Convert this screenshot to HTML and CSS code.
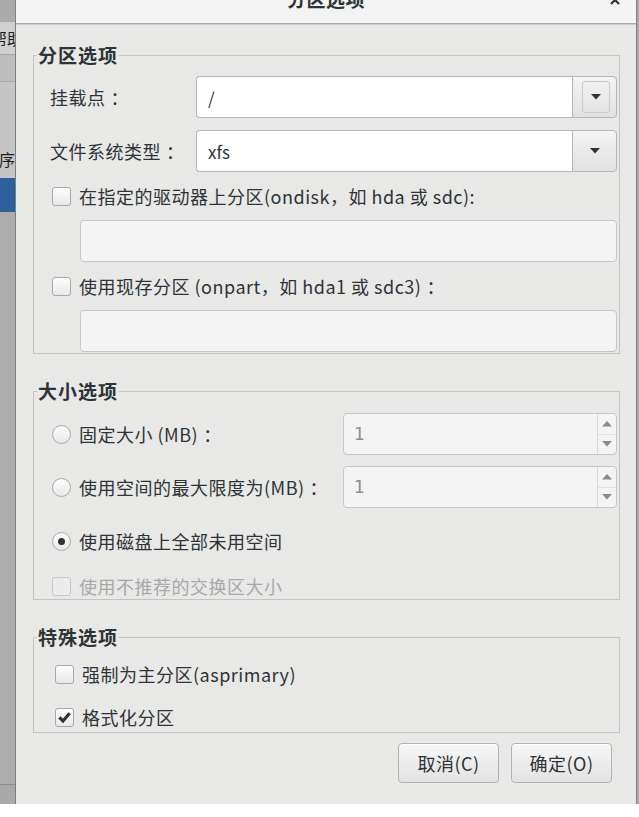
FILE: index.html
```html
<!DOCTYPE html>
<html lang="zh-CN">
<head>
<meta charset="utf-8">
<title>分区选项</title>
<link rel="stylesheet" href="styles.css">
</head>
<body>
<div class="screen">
  <aside class="bg-strip">
    <div class="band band-top"></div>
    <div class="band band-menu"><span class="cut-text">帮助</span></div>
    <div class="band band-tool"></div>
    <div class="band band-list"><span class="end-text">程序</span></div>
    <div class="band band-sel"></div>
    <div class="band band-rest"></div>
    <div class="band band-foot"></div>
  </aside>

  <section class="dialog">
    <header class="titlebar">
      <span></span>
      <span class="title">分区选项</span>
      <svg class="close" width="10" height="10" viewBox="0 0 10 10"><path d="M1 1 L9 9 M9 1 L1 9" stroke="#2e3436" stroke-width="2.2" fill="none"/></svg>
    </header>

    <div class="content">
      <fieldset class="frame">
        <legend>分区选项</legend>
        <div class="frame-body body-1">
          <div class="field-row">
            <span class="field-label">挂载点<span class="fw">：</span></span>
            <div class="combo">
              <div class="combo-entry">/</div>
              <div class="combo-btn"><span class="combo-inner"><svg width="10" height="6" viewBox="0 0 10 6"><polygon points="0,0 10,0 5,5.5" fill="#2e3436"/></svg></span></div>
            </div>
          </div>
          <div class="field-row">
            <span class="field-label">文件系统类型<span class="fw">：</span></span>
            <div class="combo">
              <div class="combo-entry">xfs</div>
              <div class="combo-btn"><svg width="10" height="6" viewBox="0 0 10 6"><polygon points="0,0 10,0 5,5.5" fill="#2e3436"/></svg></div>
            </div>
          </div>
          <div class="check-row"><span class="cb"></span><span>在指定的驱动器上分区(ondisk，如 hda 或 sdc):</span></div>
          <div class="entry"></div>
          <div class="check-row"><span class="cb"></span><span>使用现存分区 (onpart，如 hda1 或 sdc3)<span class="fw">：</span></span></div>
          <div class="entry"></div>
        </div>
      </fieldset>

      <fieldset class="frame">
        <legend>大小选项</legend>
        <div class="frame-body body-2">
          <div class="size-row">
            <div class="opt"><span class="radio"></span><span>固定大小 (MB)<span class="fw">：</span></span></div>
            <div class="spin">
              <span class="spin-value">1</span>
              <span class="spin-btns">
                <span class="spin-half"><svg width="10" height="6" viewBox="0 0 10 6"><polygon points="0,5.5 10,5.5 5,0" fill="#8b8b8b"/></svg></span>
                <span class="spin-half lower"><svg width="10" height="6" viewBox="0 0 10 6"><polygon points="0,0 10,0 5,5.5" fill="#8b8b8b"/></svg></span>
              </span>
            </div>
          </div>
          <div class="size-row row-2">
            <div class="opt"><span class="radio"></span><span>使用空间的最大限度为(MB)<span class="fw">：</span></span></div>
            <div class="spin">
              <span class="spin-value">1</span>
              <span class="spin-btns">
                <span class="spin-half"><svg width="10" height="6" viewBox="0 0 10 6"><polygon points="0,5.5 10,5.5 5,0" fill="#8b8b8b"/></svg></span>
                <span class="spin-half lower"><svg width="10" height="6" viewBox="0 0 10 6"><polygon points="0,0 10,0 5,5.5" fill="#8b8b8b"/></svg></span>
              </span>
            </div>
          </div>
          <div class="check-row spaced"><span class="radio checked"></span><span>使用磁盘上全部未用空间</span></div>
          <div class="check-row spaced disabled"><span class="cb"></span><span>使用不推荐的交换区大小</span></div>
        </div>
      </fieldset>

      <fieldset class="frame">
        <legend>特殊选项</legend>
        <div class="frame-body body-3">
          <div class="check-row inset"><span class="cb"></span><span>强制为主分区(asprimary)</span></div>
          <div class="check-row inset"><span class="cb"><svg width="17" height="17" viewBox="0 0 17 17"><path d="M3.3 8.3 L7 12 L13.7 4.3" stroke="#2e3436" stroke-width="3.2" fill="none"/></svg></span><span>格式化分区</span></div>
        </div>
      </fieldset>

      <div class="actions">
        <button class="btn" type="button">取消(C)</button>
        <button class="btn" type="button">确定(O)</button>
      </div>
    </div>
  </section>

  <div class="edge"></div>
</div>
</body>
</html>
```

FILE: styles.css
```css
* { box-sizing: border-box; }

html, body {
  margin: 0;
  padding: 0;
  background: #ffffff;
}

body {
  font-family: "Noto Sans CJK SC", sans-serif;
  color: #2e3436;
}

.screen {
  display: flex;
  width: 639px;
  height: 804px;
}

/* background window strip on the left */
.bg-strip {
  width: 16px;
  flex: none;
  display: flex;
  flex-direction: column;
  border-right: 1px solid #7e7e7e;
  overflow: hidden;
  font-size: 16px;
  line-height: 18px;
  color: #1e1e1e;
}

.band {
  flex: none;
  display: flex;
  align-items: center;
  overflow: hidden;
  white-space: nowrap;
}

.band-top { height: 22px; background: #ababab; }
.band-menu { height: 33px; background: #d0d0d0; border-bottom: 1px solid #a4a4a4; }
.band-tool { height: 27px; background: #bdbdbd; border-bottom: 1px solid #a9a9a9; }
.band-list { height: 96px; background: #c5c5c5; justify-content: flex-end; align-items: flex-end; padding-bottom: 10px; }
.band-sel { height: 34px; background: #2f5e9c; }
.band-rest { height: 573px; background: #adadad; border-bottom: 1px solid #8f8f8f; }
.band-foot { flex: 1; background: #a9a9a9; }

.cut-text { margin-left: -9px; }
.end-text { margin-right: 0; }

.edge {
  flex: 1;
  background: #a7a7a7;
}

/* dialog */
.dialog {
  width: 621px;
  flex: none;
  display: flex;
  flex-direction: column;
  background: #e8e8e7;
  border-right: 1px solid #858585;
}

.titlebar {
  height: 24px;
  flex: none;
  display: grid;
  grid-template-columns: 1fr auto 1fr;
  align-items: start;
  background: #f3f3f3;
  border-bottom: 1px solid #a8a8a8;
  box-shadow: 0 1px 0 #cdcdcd;
  overflow: hidden;
}

.title {
  font-size: 19px;
  line-height: 20px;
  font-weight: 700;
  margin-top: -11px;
  letter-spacing: 0.5px;
}

.close {
  justify-self: end;
  margin-right: 16px;
  margin-top: -5px;
}

.content {
  flex: 1;
  display: flex;
  flex-direction: column;
  padding: 21px 16px 21px 17px;
}

.frame {
  margin: 0;
  padding: 0;
  min-width: 0;
  border: 1px solid #c3c3c3;
}

.frame + .frame { margin-top: 27px; }

.frame legend {
  margin-left: 3px;
  padding: 0 1px;
  font-size: 19px;
  line-height: 20px;
  font-weight: 700;
  letter-spacing: 1px;
  color: #2e3436;
}

.frame-body {
  display: flex;
  flex-direction: column;
  padding: 11px 2px 1px 16px;
  font-size: 18px;
  letter-spacing: 0.5px;
}

.fw {
  padding-left: 5px;
}

.body-1 { gap: 12px; }
.body-2 { padding-top: 12px; padding-bottom: 1px; }
.body-3 { padding-top: 15px; padding-bottom: 3px; gap: 19px; }

.field-row {
  display: grid;
  grid-template-columns: 146px 1fr;
  align-items: center;
  height: 42px;
}

.combo {
  display: flex;
  height: 42px;
}

.combo-entry {
  flex: 1;
  display: flex;
  align-items: center;
  padding-left: 11px;
  background: #ffffff;
  border: 1px solid #b6b6b6;
  border-right: 0;
  border-radius: 4px 0 0 4px;
  font-size: 17px;
  letter-spacing: 0;
}

.combo-btn {
  width: 45px;
  flex: none;
  display: flex;
  align-items: center;
  justify-content: center;
  background: linear-gradient(#f4f4f4, #e1e1e1);
  border: 1px solid #b6b6b6;
  border-radius: 0 4px 4px 0;
}

.combo-inner {
  width: 28px;
  height: 32px;
  display: flex;
  align-items: center;
  justify-content: center;
  border: 1px solid #cbcbcb;
  border-radius: 3px;
  margin-left: 3px;
}

.check-row {
  display: flex;
  align-items: center;
  gap: 8px;
  height: 24px;
  padding-left: 2px;
}

.check-row.inset { padding-left: 5px; }
.check-row.spaced { margin-top: 21px; }

.cb {
  width: 19px;
  height: 19px;
  flex: none;
  display: flex;
  align-items: center;
  justify-content: center;
  border: 1px solid #a8a8a8;
  border-radius: 3px;
  background: linear-gradient(#fdfdfd, #e8e8e8);
}

.radio {
  width: 19px;
  height: 19px;
  flex: none;
  display: flex;
  align-items: center;
  justify-content: center;
  border: 1px solid #a8a8a8;
  border-radius: 50%;
  background: linear-gradient(#fdfdfd, #e8e8e8);
}

.radio.checked::after {
  content: "";
  width: 7px;
  height: 7px;
  border-radius: 50%;
  background: #2e3436;
}

.disabled { color: #a9a9a9; }
.disabled .cb {
  border-color: #c6c6c6;
  background: #ececec;
}

.entry {
  height: 42px;
  margin-left: 30px;
  background: #f4f4f4;
  border: 1px solid #c6c6c6;
  border-radius: 4px;
}

.size-row {
  display: grid;
  grid-template-columns: 293px 1fr;
  align-items: center;
  height: 42px;
}

.size-row.row-2 { margin-top: 11px; }

.opt {
  display: flex;
  align-items: center;
  gap: 8px;
  padding-left: 2px;
}

.spin {
  display: flex;
  height: 42px;
  background: #f4f4f4;
  border: 1px solid #c6c6c6;
  border-radius: 4px;
  overflow: hidden;
}

.spin-value {
  flex: 1;
  display: flex;
  align-items: center;
  padding-left: 10px;
  font-family: "DejaVu Sans", sans-serif;
  font-size: 17px;
  color: #8d8d8d;
  letter-spacing: 0;
}

.spin-btns {
  width: 19px;
  flex: none;
  display: flex;
  flex-direction: column;
  border-left: 1px solid #dadada;
}

.spin-half {
  flex: 1;
  display: flex;
  align-items: center;
  justify-content: center;
}

.spin-half.lower { border-top: 1px solid #e2e2e2; }

.actions {
  display: flex;
  justify-content: flex-end;
  gap: 12px;
  margin-top: 10px;
  padding-right: 8px;
}

.btn {
  width: 101px;
  height: 40px;
  padding: 0;
  border: 1px solid #b2b2b2;
  border-radius: 4px;
  background: linear-gradient(#f7f7f7, #e2e2e2);
  box-shadow: inset 0 1px 0 #ffffff;
  font-family: "Noto Sans CJK SC", sans-serif;
  font-size: 18px;
  color: #2e3436;
  letter-spacing: 0.5px;
}
```
